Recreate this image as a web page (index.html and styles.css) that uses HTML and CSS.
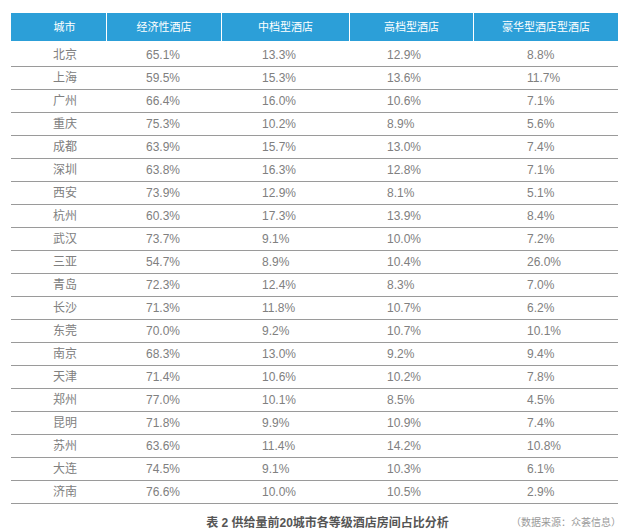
FILE: index.html
```html
<!DOCTYPE html>
<html lang="zh">
<head>
<meta charset="utf-8">
<title>表 2 供给量前20城市各等级酒店房间占比分析</title>
<link rel="stylesheet" href="styles.css">
</head>
<body>
<div class="wrap">
  <table class="tbl">
    <colgroup>
      <col class="c1"><col class="c2"><col class="c3"><col class="c4"><col class="c5">
    </colgroup>
    <thead>
      <tr>
        <th class="h1">城市</th>
        <th>经济性酒店</th>
        <th>中档型酒店</th>
        <th>高档型酒店</th>
        <th>豪华型酒店型酒店</th>
      </tr>
    </thead>
    <tbody>
      <tr><td>北京</td><td>65.1%</td><td>13.3%</td><td>12.9%</td><td>8.8%</td></tr>
      <tr><td>上海</td><td>59.5%</td><td>15.3%</td><td>13.6%</td><td>11.7%</td></tr>
      <tr><td>广州</td><td>66.4%</td><td>16.0%</td><td>10.6%</td><td>7.1%</td></tr>
      <tr><td>重庆</td><td>75.3%</td><td>10.2%</td><td>8.9%</td><td>5.6%</td></tr>
      <tr><td>成都</td><td>63.9%</td><td>15.7%</td><td>13.0%</td><td>7.4%</td></tr>
      <tr><td>深圳</td><td>63.8%</td><td>16.3%</td><td>12.8%</td><td>7.1%</td></tr>
      <tr><td>西安</td><td>73.9%</td><td>12.9%</td><td>8.1%</td><td>5.1%</td></tr>
      <tr><td>杭州</td><td>60.3%</td><td>17.3%</td><td>13.9%</td><td>8.4%</td></tr>
      <tr><td>武汉</td><td>73.7%</td><td>9.1%</td><td>10.0%</td><td>7.2%</td></tr>
      <tr><td>三亚</td><td>54.7%</td><td>8.9%</td><td>10.4%</td><td>26.0%</td></tr>
      <tr><td>青岛</td><td>72.3%</td><td>12.4%</td><td>8.3%</td><td>7.0%</td></tr>
      <tr><td>长沙</td><td>71.3%</td><td>11.8%</td><td>10.7%</td><td>6.2%</td></tr>
      <tr><td>东莞</td><td>70.0%</td><td>9.2%</td><td>10.7%</td><td>10.1%</td></tr>
      <tr><td>南京</td><td>68.3%</td><td>13.0%</td><td>9.2%</td><td>9.4%</td></tr>
      <tr><td>天津</td><td>71.4%</td><td>10.6%</td><td>10.2%</td><td>7.8%</td></tr>
      <tr><td>郑州</td><td>77.0%</td><td>10.1%</td><td>8.5%</td><td>4.5%</td></tr>
      <tr><td>昆明</td><td>71.8%</td><td>9.9%</td><td>10.9%</td><td>7.4%</td></tr>
      <tr><td>苏州</td><td>63.6%</td><td>11.4%</td><td>14.2%</td><td>10.8%</td></tr>
      <tr><td>大连</td><td>74.5%</td><td>9.1%</td><td>10.3%</td><td>6.1%</td></tr>
      <tr><td>济南</td><td>76.6%</td><td>10.0%</td><td>10.5%</td><td>2.9%</td></tr>
    </tbody>
  </table>
  <div class="foot">
    <span></span>
    <span class="caption">表 2 供给量前20城市各等级酒店房间占比分析</span>
    <span class="source">（数据来源：众荟信息）</span>
  </div>
</div>
</body>
</html>
```
FILE: styles.css
```css
html, body {
  margin: 0;
  padding: 0;
  background: #ffffff;
}
body {
  font-family: "Liberation Sans", "Noto Sans CJK SC", sans-serif;
  color: #808080;
}
.wrap {
  width: 607px;
  padding: 13px 0 0 11px;
}
.tbl {
  width: 607px;
  border-collapse: separate;
  border-spacing: 0;
  table-layout: fixed;
}
.c1 { width: 95px; }
.c2 { width: 115px; }
.c3 { width: 128px; }
.c4 { width: 124px; }
.c5 { width: 145px; }
.tbl th {
  background: #2c9fd8;
  color: #ffffff;
  font-weight: normal;
  font-size: 11px;
  line-height: 28px;
  height: 28px;
  padding: 0;
  text-align: center;
  border-left: 1px solid #ffffff;
}
.tbl th:first-child {
  border-left: none;
}
.tbl th.h1 {
  padding-left: 12px;
}
.tbl td {
  padding: 0;
  font-size: 12px;
  line-height: 22px;
  text-align: left;
  border-bottom: 1px solid #9a9a9a;
  color: #808080;
}
.tbl tbody tr:first-child td {
  padding-top: 3px;
}
.tbl td:nth-child(1) { padding-left: 42px; }
.tbl td:nth-child(2) { padding-left: 40px; }
.tbl td:nth-child(3) { padding-left: 41px; }
.tbl td:nth-child(4) { padding-left: 38px; }
.tbl td:nth-child(5) { padding-left: 54px; }
.foot {
  display: grid;
  grid-template-columns: 1fr auto 1fr;
  align-items: center;
  padding-top: 12px;
  line-height: 14px;
}
.caption {
  font-size: 12px;
  font-weight: bold;
  color: #555555;
  margin-left: 26px;
}
.source {
  justify-self: end;
  font-size: 10px;
  color: #999999;
  margin-right: -3px;
}
```
